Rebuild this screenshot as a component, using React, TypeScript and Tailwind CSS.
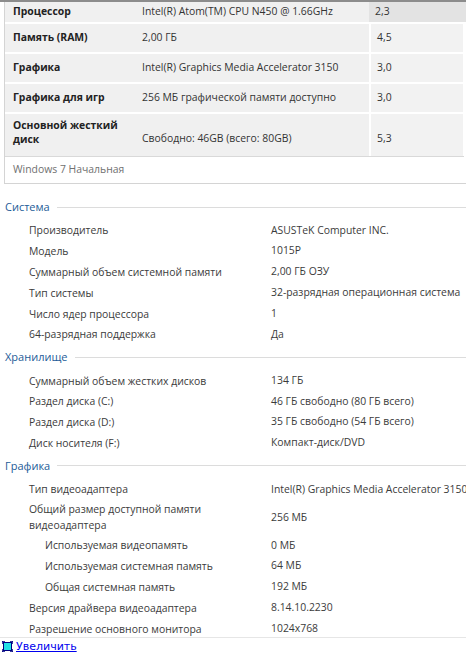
import React from 'react';

type Row = { label: React.ReactNode; value: string; indent?: boolean; tall?: boolean };

const scoreRows = [
  { label: 'Процессор', value: 'Intel(R) Atom(TM) CPU N450 @ 1.66GHz', score: '2,3' },
  { label: 'Память (RAM)', value: '2,00 ГБ', score: '4,5' },
  { label: 'Графика', value: 'Intel(R) Graphics Media Accelerator 3150', score: '3,0' },
  { label: 'Графика для игр', value: '256 МБ графической памяти доступно', score: '3,0' },
];

const sections: { title: string; rows: Row[] }[] = [
  {
    title: 'Система',
    rows: [
      { label: 'Производитель', value: 'ASUSTeK Computer INC.' },
      { label: 'Модель', value: '1015P' },
      { label: 'Суммарный объем системной памяти', value: '2,00 ГБ ОЗУ' },
      { label: 'Тип системы', value: '32-разрядная операционная система' },
      { label: 'Число ядер процессора', value: '1' },
      { label: '64-разрядная поддержка', value: 'Да' },
    ],
  },
  {
    title: 'Хранилище',
    rows: [
      { label: 'Суммарный объем жестких дисков', value: '134 ГБ' },
      { label: 'Раздел диска (C:)', value: '46 ГБ свободно (80 ГБ всего)' },
      { label: 'Раздел диска (D:)', value: '35 ГБ свободно (54 ГБ всего)' },
      { label: 'Диск носителя (F:)', value: 'Компакт-диск/DVD' },
    ],
  },
  {
    title: 'Графика',
    rows: [
      { label: 'Тип видеоадаптера', value: 'Intel(R) Graphics Media Accelerator 3150' },
      {
        label: (
          <>
            Общий размер доступной памяти
            <br />
            видеоадаптера
          </>
        ),
        value: '256 МБ',
        tall: true,
      },
      { label: 'Используемая видеопамять', value: '0 МБ', indent: true },
      { label: 'Используемая системная память', value: '64 МБ', indent: true },
      { label: 'Общая системная память', value: '192 МБ', indent: true },
      { label: 'Версия драйвера видеоадаптера', value: '8.14.10.2230' },
      { label: 'Разрешение основного монитора', value: '1024x768' },
    ],
  },
];

export default function App() {
  return (
    <div
      className="relative h-[654px] w-[466px] overflow-hidden bg-white text-[10.4px] text-[#3b3b3b]"
      style={{ fontFamily: '"Open Sans", "Noto Sans", sans-serif' }}
    >
      <div className="h-[2px] bg-[#8c8c8c]" />

      {/* rating table */}
      <div className="ml-[4px] border-l border-[#d4d4d4]">
        {scoreRows.map((r, i) => (
          <div
            key={r.label}
            className={`grid grid-cols-[128px_236px_98px] ${i === 0 ? 'h-[20px]' : 'h-[30px] border-t-2 border-white'}`}
          >
            <div className="flex items-center whitespace-nowrap bg-[#f0f0f0] pl-[8px] font-bold text-[#222]">{r.label}</div>
            <div className="flex items-center whitespace-nowrap bg-[#f0f0f0] pl-[9px] text-[#333]">{r.value}</div>
            <div
              className={`flex items-center pl-[6px] text-[#333] ${i === 0 ? 'bg-[#e3e3e3]' : 'mr-[4px] border-l-2 border-white bg-[#f2f2f2]'}`}
            >
              {r.score}
            </div>
          </div>
        ))}
        <div className="grid h-[44px] grid-cols-[128px_236px_98px] border-t-2 border-white">
          <div className="bg-[#f0f0f0] pl-[8px] pt-[5px] font-bold leading-[13.5px] text-[#222]">
            Основной жесткий
            <br />
            диск
          </div>
          <div className="flex items-end whitespace-nowrap bg-[#f0f0f0] pb-[9px] pl-[9px] text-[#333]">
            Свободно: 46GB (всего: 80GB)
          </div>
          <div className="mr-[4px] flex items-end border-l-2 border-white bg-[#f2f2f2] pb-[9px] pl-[6px] text-[#333]">
            5,3
          </div>
        </div>
        <div className="h-[1px] w-[459px] bg-[#d9d9d9]" />
        <div className="flex h-[26px] items-center pl-[8px] text-[#707070]">Windows 7 Начальная</div>
        <div className="h-[1px] bg-[#d4d4d4]" />
      </div>

      {/* property sections */}
      <div className="mt-[12px]">
        {sections.map((s) => (
          <div key={s.title} className="mb-[1.5px]">
            <div className="flex h-[22px] items-center gap-[7px] pl-[5px]">
              <span className="text-[11px] text-[#1d5c98]">{s.title}</span>
              <div className="h-[1px] flex-1 bg-[#dcdcdc]" />
            </div>
            <div className="pt-[2px]">
              {s.rows.map((r, i) => (
                <div
                  key={i}
                  className={`grid grid-cols-[270px_1fr] ${r.tall ? 'h-[35.2px]' : 'h-[20.8px]'}`}
                >
                  <div
                    className={`flex items-center whitespace-nowrap leading-[16px] ${r.indent ? 'pl-[45px]' : 'pl-[29px]'}`}
                  >
                    <span>{r.label}</span>
                  </div>
                  <div className="flex items-center whitespace-nowrap pl-[1px]">{r.value}</div>
                </div>
              ))}
            </div>
          </div>
        ))}
      </div>

      <div className="absolute left-0 top-[637px] h-[1px] w-full bg-[#e6e6e6]" />
      <div
        className="absolute left-[2px] top-[639px] flex h-[15px] items-center gap-[3px]"
        style={{ fontFamily: '"DejaVu Sans", Verdana, sans-serif' }}
      >
        <svg width="11" height="11" viewBox="0 0 11 11">
          <rect x="1.5" y="1.5" width="8" height="8" fill="#22e0e6" stroke="#000080" strokeWidth="1" />
          <path d="M0 0h3M0 0v3M8 0h3M11 0v3M0 11h3M0 8v3M8 11h3M11 8v3" stroke="#000080" strokeWidth="1.5" />
        </svg>
        <a className="text-[11px] leading-[14px] text-[#0000ee] underline">Увеличить</a>
      </div>
    </div>
  );
}
